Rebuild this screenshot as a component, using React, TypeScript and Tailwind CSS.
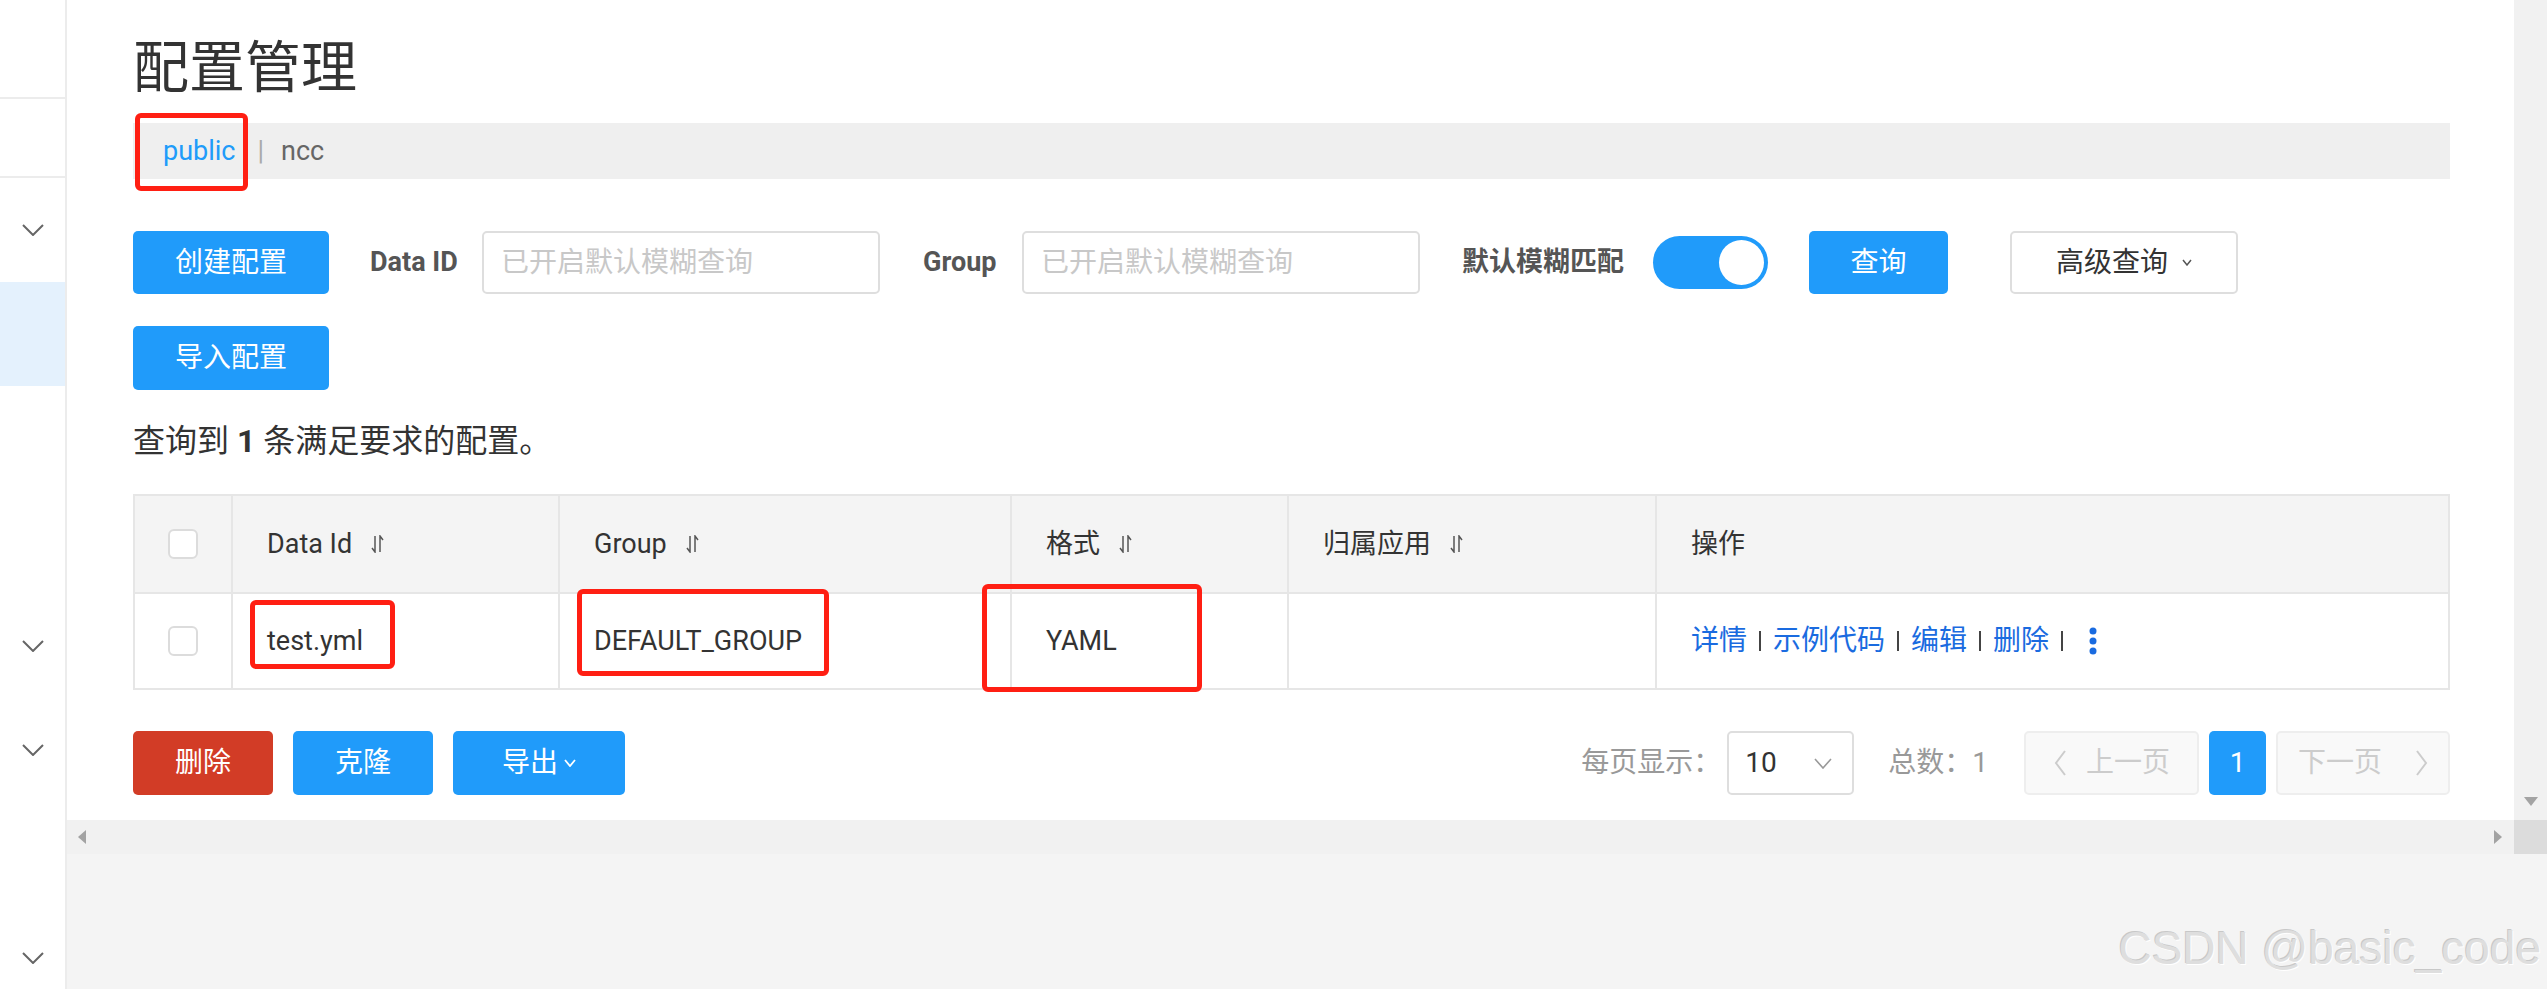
import React from "react";

const Chevron = ({ w = 22, h = 12, color = "#666", sw = 2 }: { w?: number; h?: number; color?: string; sw?: number }) => (
  <svg width={w} height={h} viewBox={`0 0 ${w} ${h}`}>
    <polyline points={`1,1 ${w / 2},${h - 1} ${w - 1},1`} fill="none" stroke={color} strokeWidth={sw} />
  </svg>
);

const SortIcon = () => (
  <svg width="16" height="18" viewBox="0 0 16 18" className="ml-[18px] shrink-0">
    <path d="M5 1 V17 L2 13" fill="none" stroke="#555" strokeWidth="1.5" />
    <path d="M10 17 V1 L13 5" fill="none" stroke="#555" strokeWidth="1.5" />
  </svg>
);

const Checkbox = () => (
  <div className="h-[30px] w-[30px] rounded-[6px] border-2 border-[#dcdcdc] bg-white" />
);

const LeftArrow = ({ color = "#ccc" }: { color?: string }) => (
  <svg width="12" height="26" viewBox="0 0 12 26">
    <polyline points="11,1 2,13 11,25" fill="none" stroke={color} strokeWidth="2" />
  </svg>
);

const RightArrow = ({ color = "#ccc" }: { color?: string }) => (
  <svg width="12" height="26" viewBox="0 0 12 26">
    <polyline points="1,1 10,13 1,25" fill="none" stroke={color} strokeWidth="2" />
  </svg>
);

const Sep = () => <span className="mx-[12px] inline-block h-[20px] w-[2px] bg-[#444]" />;

export default function App() {
  return (
    <div className="flex h-[989px] w-[2547px] overflow-hidden bg-white font-['Roboto','Noto_Sans_CJK_SC',sans-serif] text-[#333]">
      {/* Sidebar */}
      <aside className="flex w-[67px] shrink-0 flex-col border-r-2 border-[#ececec] bg-white">
        <div className="h-[99px] shrink-0 border-b-2 border-[#ececec]" />
        <div className="h-[79px] shrink-0 border-b-2 border-[#ececec]" />
        <div className="flex h-[104px] shrink-0 items-center justify-center">
          <Chevron />
        </div>
        <div className="h-[104px] shrink-0 bg-[#e4f1fd]" />
        <div className="h-[208px] shrink-0" />
        <div className="flex h-[104px] shrink-0 items-center justify-center">
          <Chevron />
        </div>
        <div className="flex h-[104px] shrink-0 items-center justify-center">
          <Chevron />
        </div>
        <div className="h-[104px] shrink-0" />
        <div className="flex h-[104px] shrink-0 items-center justify-center">
          <Chevron />
        </div>
      </aside>

      <div className="flex min-w-0 flex-1 flex-col">
        <div className="flex h-[820px] shrink-0">
          <main className="flex min-w-0 flex-1 flex-col bg-white pl-[66px] pr-[64px]">
            <h1 className="mt-[40px] h-[56px] text-[56px] font-normal leading-[56px] text-[#333]">配置管理</h1>

            <div className="relative mt-[27px] flex h-[56px] items-center bg-[#efefef] pl-[30px] text-[27px]">
              <span className="text-[#209bfa]">public</span>
              <span className="ml-[22px] mr-[17px] text-[#aaa]">|</span>
              <span className="text-[#666]">ncc</span>
              <div className="absolute left-[2px] top-[-10px] h-[78px] w-[113px] rounded-[6px] border-[5px] border-[#ff1f13]" />
            </div>

            {/* Row 1 */}
            <div className="mt-[52px] flex h-[63px] items-center">
              <button className="h-[63px] w-[196px] shrink-0 rounded-[5px] bg-[#209bfa] text-[28px] text-white">创建配置</button>
              <span className="ml-[41px] w-[86px] shrink-0 whitespace-nowrap text-[27px] font-bold text-[#555]">Data ID</span>
              <div className="ml-[26px] flex h-[63px] w-[398px] shrink-0 items-center rounded-[5px] border-2 border-[#dedede] pl-[17px] text-[28px] text-[#c8c8c8]">已开启默认模糊查询</div>
              <span className="ml-[43px] w-[74px] shrink-0 whitespace-nowrap text-[27px] font-bold text-[#555]">Group</span>
              <div className="ml-[25px] flex h-[63px] w-[398px] shrink-0 items-center rounded-[5px] border-2 border-[#dedede] pl-[17px] text-[28px] text-[#c8c8c8]">已开启默认模糊查询</div>
              <span className="ml-[42px] w-[166px] shrink-0 whitespace-nowrap text-[27px] font-bold text-[#555]">默认模糊匹配</span>
              <div className="ml-[25px] flex h-[53px] w-[115px] shrink-0 items-center justify-end rounded-full bg-[#209bfa] pr-[4px]">
                <div className="h-[45px] w-[45px] rounded-full bg-white" />
              </div>
              <button className="ml-[41px] h-[63px] w-[139px] shrink-0 rounded-[5px] bg-[#209bfa] text-[28px] text-white">查询</button>
              <button className="ml-[62px] flex h-[63px] w-[228px] shrink-0 items-center justify-center gap-[14px] rounded-[5px] border-2 border-[#dedede] bg-white text-[28px] text-[#333]">
                <span>高级查询</span>
                <Chevron w={10} h={7} color="#555" sw={1.5} />
              </button>
            </div>

            {/* Row 2 */}
            <div className="mt-[32px] flex h-[64px] items-center">
              <button className="h-[64px] w-[196px] rounded-[5px] bg-[#209bfa] text-[28px] text-white">导入配置</button>
            </div>

            <div className="mt-[31px] flex h-[40px] items-center whitespace-pre text-[32px] text-[#333]">
              <span>查询到 </span>
              <span className="font-bold">1</span>
              <span> 条满足要求的配置。</span>
            </div>

            {/* Table */}
            <div className="relative mt-[33px] border-l-2 border-t-2 border-[#e6e6e6] text-[27px]">
              <div className="flex h-[98px] bg-[#f4f4f4]">
                <div className="flex w-[98px] shrink-0 items-center justify-center border-b-2 border-r-2 border-[#e6e6e6]">
                  <Checkbox />
                </div>
                <div className="flex w-[327px] shrink-0 items-center border-b-2 border-r-2 border-[#e6e6e6] pl-[34px]">
                  <span>Data Id</span>
                  <SortIcon />
                </div>
                <div className="flex w-[452px] shrink-0 items-center border-b-2 border-r-2 border-[#e6e6e6] pl-[34px]">
                  <span>Group</span>
                  <SortIcon />
                </div>
                <div className="flex w-[277px] shrink-0 items-center border-b-2 border-r-2 border-[#e6e6e6] pl-[34px]">
                  <span>格式</span>
                  <SortIcon />
                </div>
                <div className="flex w-[368px] shrink-0 items-center border-b-2 border-r-2 border-[#e6e6e6] pl-[34px]">
                  <span>归属应用</span>
                  <SortIcon />
                </div>
                <div className="flex flex-1 items-center border-b-2 border-r-2 border-[#e6e6e6] pl-[34px]">
                  <span>操作</span>
                </div>
              </div>
              <div className="flex h-[96px] bg-white">
                <div className="flex w-[98px] shrink-0 items-center justify-center border-b-2 border-r-2 border-[#e6e6e6]">
                  <Checkbox />
                </div>
                <div className="flex w-[327px] shrink-0 items-center border-b-2 border-r-2 border-[#e6e6e6] pl-[34px]">test.yml</div>
                <div className="flex w-[452px] shrink-0 items-center border-b-2 border-r-2 border-[#e6e6e6] pl-[34px]">DEFAULT_GROUP</div>
                <div className="flex w-[277px] shrink-0 items-center border-b-2 border-r-2 border-[#e6e6e6] pl-[34px]">YAML</div>
                <div className="flex w-[368px] shrink-0 items-center border-b-2 border-r-2 border-[#e6e6e6] pl-[34px]" />
                <div className="flex flex-1 items-center border-b-2 border-r-2 border-[#e6e6e6] pl-[34px] text-[28px] text-[#1a6be0]">
                  <span>详情</span>
                  <Sep />
                  <span>示例代码</span>
                  <Sep />
                  <span>编辑</span>
                  <Sep />
                  <span>删除</span>
                  <Sep />
                  <svg width="8" height="28" viewBox="0 0 8 28" className="ml-[14px]">
                    <circle cx="4" cy="4" r="3.5" fill="#1a6be0" />
                    <circle cx="4" cy="14" r="3.5" fill="#1a6be0" />
                    <circle cx="4" cy="24" r="3.5" fill="#1a6be0" />
                  </svg>
                </div>
              </div>
              {/* annotation boxes */}
              <div className="absolute left-[115px] top-[104px] h-[69px] w-[145px] rounded-[6px] border-[5px] border-[#ff1f13]" />
              <div className="absolute left-[442px] top-[93px] h-[87px] w-[252px] rounded-[6px] border-[5px] border-[#ff1f13]" />
              <div className="absolute left-[847px] top-[88px] h-[108px] w-[220px] rounded-[6px] border-[5px] border-[#ff1f13]" />
            </div>

            {/* Bottom actions */}
            <div className="mt-[41px] flex h-[64px] items-center">
              <button className="h-[64px] w-[140px] shrink-0 rounded-[5px] bg-[#d23c26] text-[28px] text-white">删除</button>
              <button className="ml-[20px] h-[64px] w-[140px] shrink-0 rounded-[5px] bg-[#209bfa] text-[28px] text-white">克隆</button>
              <button className="ml-[20px] flex h-[64px] w-[172px] shrink-0 items-center justify-center gap-[6px] rounded-[5px] bg-[#209bfa] text-[28px] text-white">
                <span>导出</span>
                <Chevron w={12} h={8} color="#fff" sw={1.8} />
              </button>

              <div className="ml-auto flex items-center text-[28px] text-[#999]">
                <span className="whitespace-nowrap">每页显示：</span>
                <div className="ml-[6px] flex h-[64px] w-[127px] items-center justify-between rounded-[5px] border-2 border-[#dedede] pl-[16px] pr-[20px] text-[#333]">
                  <span>10</span>
                  <Chevron w={18} h={11} color="#999" sw={1.6} />
                </div>
                <span className="ml-[34px] whitespace-nowrap">总数：1</span>
                <div className="ml-[36px] flex h-[64px] w-[175px] items-center gap-[20px] rounded-[5px] border-2 border-[#eeeeee] bg-[#f9f9f9] pl-[28px] text-[#cccccc]">
                  <LeftArrow />
                  <span>上一页</span>
                </div>
                <div className="ml-[10px] flex h-[64px] w-[57px] items-center justify-center rounded-[5px] bg-[#209bfa] text-white">1</div>
                <div className="ml-[10px] flex h-[64px] w-[174px] items-center gap-[34px] rounded-[5px] border-2 border-[#eeeeee] bg-[#f9f9f9] pl-[20px] text-[#cccccc]">
                  <span>下一页</span>
                  <RightArrow />
                </div>
              </div>
            </div>
          </main>

          {/* vertical scrollbar */}
          <div className="flex w-[33px] shrink-0 flex-col items-center justify-end bg-[#f1f1f1] pb-[14px]">
            <svg width="14" height="9" viewBox="0 0 14 9">
              <polygon points="0,0 14,0 7,9" fill="#a3a3a3" />
            </svg>
          </div>
        </div>

        {/* horizontal scrollbar */}
        <div className="flex h-[34px] shrink-0">
          <div className="flex flex-1 items-center justify-between bg-[#f1f1f1] pl-[11px] pr-[12px]">
            <svg width="8" height="14" viewBox="0 0 8 14">
              <polygon points="8,0 8,14 0,7" fill="#a3a3a3" />
            </svg>
            <svg width="8" height="14" viewBox="0 0 8 14">
              <polygon points="0,0 0,14 8,7" fill="#a3a3a3" />
            </svg>
          </div>
          <div className="w-[33px] shrink-0 bg-[#dcdcdc]" />
        </div>

        {/* bottom area */}
        <div className="flex flex-1 items-end justify-end bg-[#f4f4f4] pb-[18px] pr-[6px]">
          <span className="font-['Liberation_Sans',sans-serif] text-[46px] leading-[46px] text-[#dedede] [text-shadow:1px_1px_0_#ffffff,-1px_-1px_0_#c8c8c8]">
            CSDN @basic_code
          </span>
        </div>
      </div>
    </div>
  );
}
